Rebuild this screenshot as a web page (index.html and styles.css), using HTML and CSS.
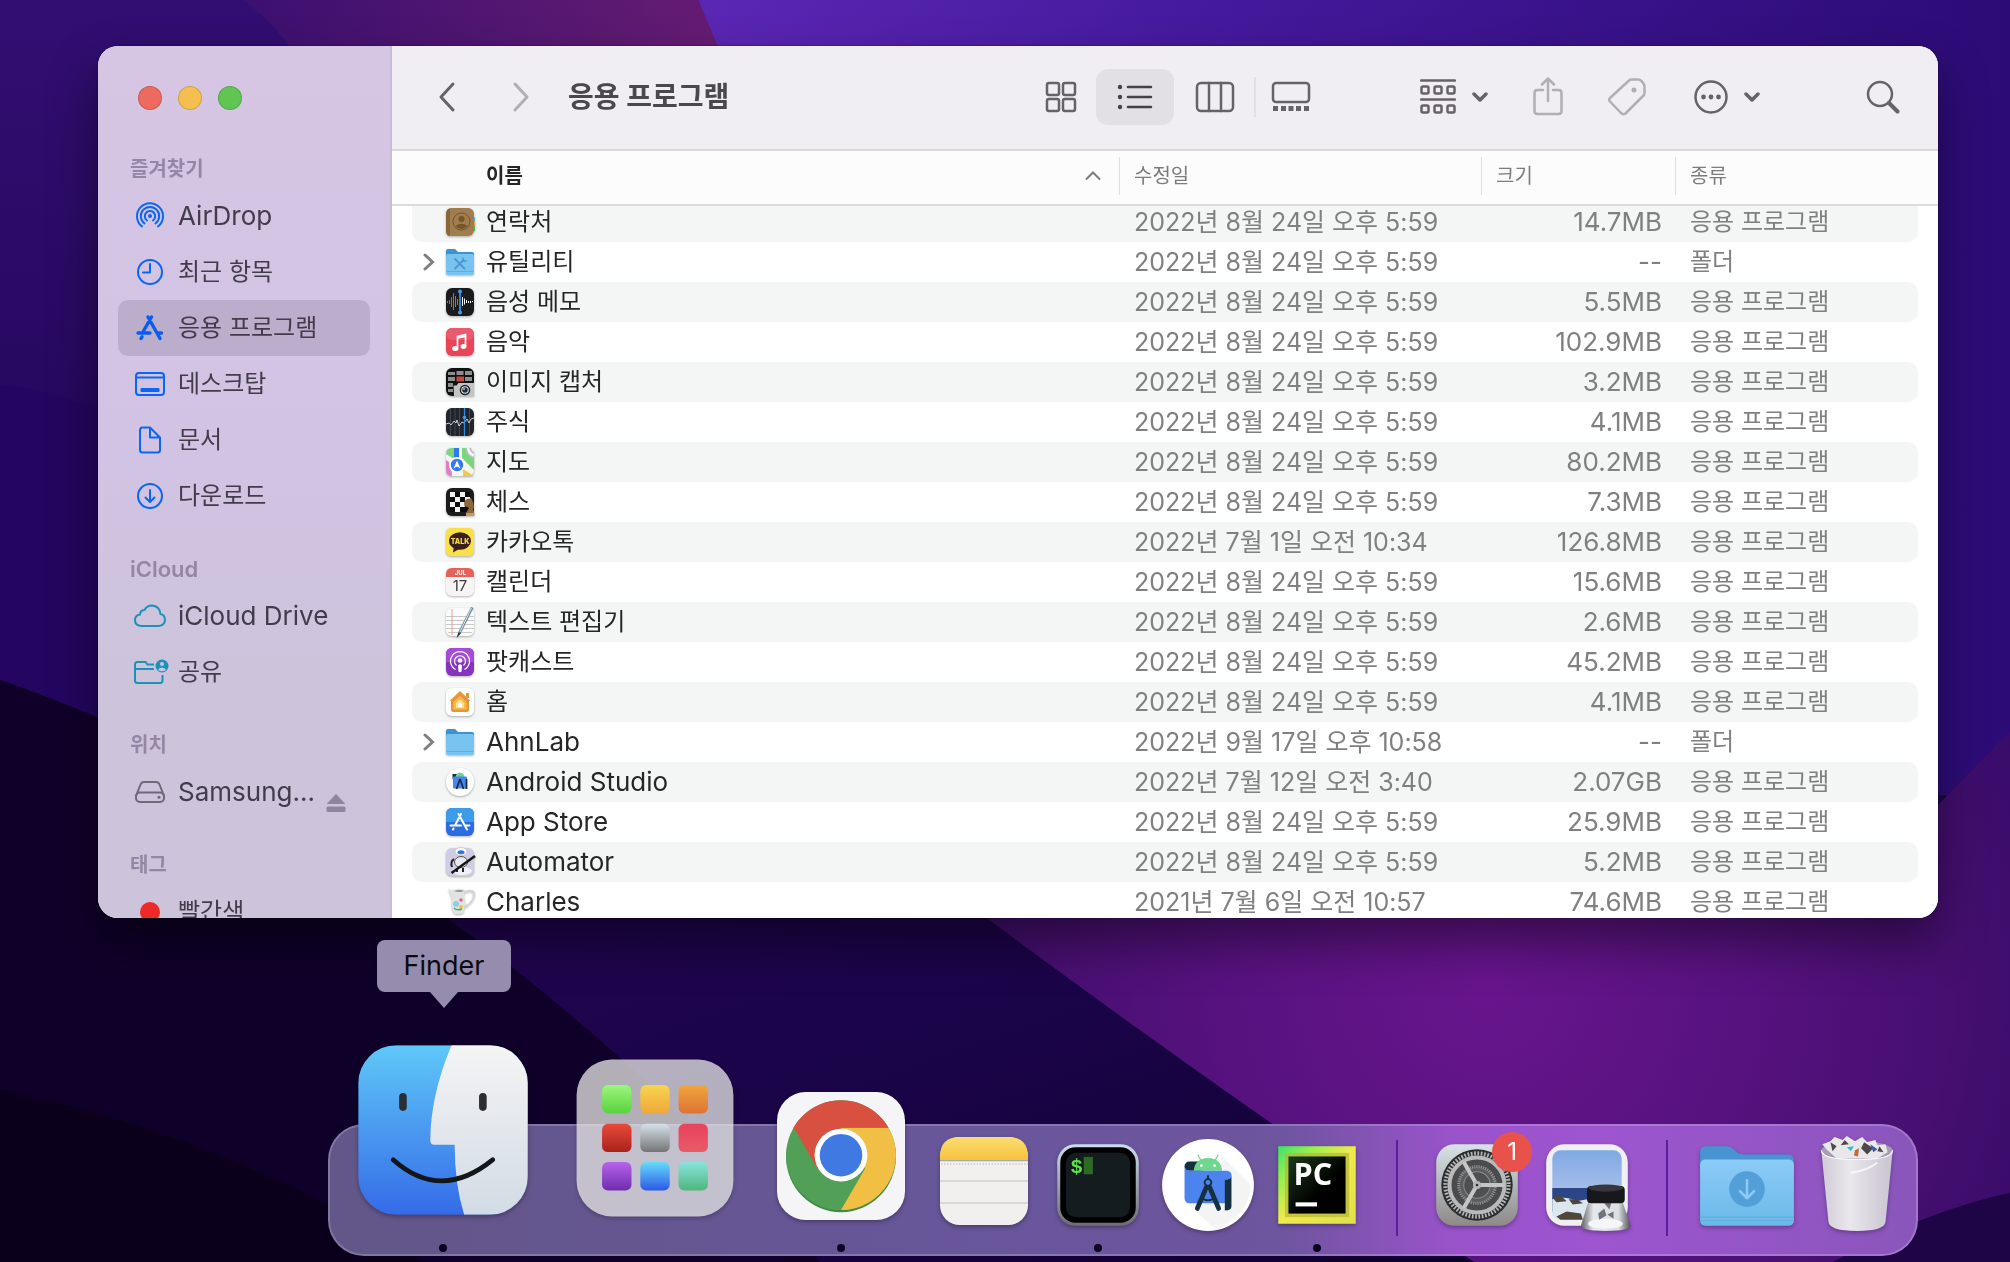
FILE: index.html
```html
<!DOCTYPE html>
<html lang="ko">
<head>
  <meta charset="UTF-8">
  <meta name="viewport" content="width=device-width, initial-scale=1.0">
  <title>응용 프로그램</title>
  <link rel="stylesheet" href="styles.css">
</head>
<body>
  <!-- wallpaper -->
  <svg class="wallpaper" viewBox="0 0 1568 984" preserveAspectRatio="none" aria-hidden="true">
    <defs>
      <linearGradient id="wp-base" x1="0" y1="0" x2="0" y2="1">
        <stop offset="0" stop-color="#320e72"/><stop offset=".5" stop-color="#210556"/><stop offset="1" stop-color="#130033"/>
      </linearGradient>
      <linearGradient id="wp-plum" x1="0" y1="0" x2="1" y2="0">
        <stop offset="0" stop-color="#3c1070"/><stop offset="1" stop-color="#651c72"/>
      </linearGradient>
      <linearGradient id="wp-blue" x1="0" y1="0" x2="1" y2="0">
        <stop offset="0" stop-color="#5a27b4"/><stop offset=".4" stop-color="#44199c"/><stop offset="1" stop-color="#2c0b76"/>
      </linearGradient>
      <linearGradient id="wp-navy" x1="0" y1="0" x2="1" y2="1">
        <stop offset="0" stop-color="#220550"/><stop offset=".5" stop-color="#1a0448"/><stop offset="1" stop-color="#10002f"/>
      </linearGradient>
      <radialGradient id="wp-magenta" gradientUnits="userSpaceOnUse" cx="1160" cy="770" r="480">
        <stop offset="0" stop-color="#67158c"/><stop offset=".4" stop-color="#581280"/><stop offset=".75" stop-color="#460f70"/><stop offset="1" stop-color="#340b68"/>
      </radialGradient>
    </defs>
    <rect width="1568" height="984" fill="url(#wp-base)"/>
    <path d="M190 0H560V80H250Q230 30 190 0Z" fill="url(#wp-plum)"/>
    <path d="M545 0H1568V620H1400L570 60Z" fill="url(#wp-blue)"/>
    <path d="M0 300Q50 305 100 330V620L0 530Z" fill="#240660"/>
    <path d="M0 530Q200 600 360 725Q480 800 560 880L640 984H0Z" fill="#0f0029"/>
    <path d="M0 850Q180 885 330 984H0Z" fill="#0a001c"/>
    <path d="M300 680H760Q900 810 1010 885L1160 984H640Q500 820 300 680Z" fill="url(#wp-navy)"/>
    <path d="M700 640H1500L1568 570V984H1150Q950 850 770 716Z" fill="url(#wp-magenta)"/>
    <path d="M1430 984Q1500 945 1568 930V984Z" fill="#1d0546"/>
  </svg>

  <div class="desktop">
    <main class="window">
      <aside class="sidebar">
        <div class="lights">
          <button class="light close" aria-label="닫기"></button>
          <button class="light minimize" aria-label="최소화"></button>
          <button class="light maximize" aria-label="확대"></button>
        </div>

        <nav>
          <h2>즐겨찾기</h2>
          <ul>
            <li><a href="#" lang="en">
              <svg class="side-icon" viewBox="0 0 40 32" fill="none" stroke="#0a66f5" stroke-width="2" stroke-linecap="round">
                <circle cx="20" cy="16" r="2" fill="#0a66f5" stroke="none"/>
                <path d="M17 20.500A5.200 5.200 0 1 1 23 20.500M14.500 23.500A9.200 9.200 0 1 1 25.500 23.500M12 26.500A13 13 0 1 1 28 26.500"/>
              </svg>AirDrop</a></li>
            <li><a href="#">
              <svg class="side-icon" viewBox="0 0 40 32" fill="none" stroke="#0a66f5" stroke-width="2" stroke-linecap="round" stroke-linejoin="round">
                <circle cx="20" cy="16" r="12"/><path d="M20 8V16.500H13"/>
              </svg>최근 항목</a></li>
            <li><a href="#" class="selected">
              <svg class="side-icon" viewBox="0 0 40 32" fill="none" stroke="#0a5cf0" stroke-width="3.400" stroke-linecap="round">
                <path d="M21.500 5L13.500 19M18 5L30 26.500M8 21H20M27 21H31.500M12 24.800L11 26.500"/>
              </svg>응용 프로그램</a></li>
            <li><a href="#">
              <svg class="side-icon" viewBox="0 0 40 32" fill="none" stroke="#0a66f5" stroke-width="2">
                <rect x="6" y="5" width="28" height="22" rx="3"/><path d="M6 9.500H34"/><rect x="10.500" y="20" width="19" height="4" rx="1" fill="#0a66f5" stroke="none"/>
              </svg>데스크탑</a></li>
            <li><a href="#">
              <svg class="side-icon" viewBox="0 0 40 32" fill="none" stroke="#0a66f5" stroke-width="2" stroke-linejoin="round">
                <path d="M12.500 3.500H20L30 13.500V26Q30 28.500 27.500 28.500H12.500Q10 28.500 10 26V6Q10 3.500 12.500 3.500ZM20 3.500V13.500H30"/>
              </svg>문서</a></li>
            <li><a href="#">
              <svg class="side-icon" viewBox="0 0 40 32" fill="none" stroke="#0a66f5" stroke-width="2" stroke-linecap="round" stroke-linejoin="round">
                <circle cx="20" cy="16" r="12"/><path d="M20 10V21.500M15.500 17.500L20 22L24.500 17.500"/>
              </svg>다운로드</a></li>
          </ul>

          <h2 lang="en">iCloud</h2>
          <ul>
            <li><a href="#" lang="en">
              <svg class="side-icon" viewBox="0 0 40 32" fill="none" stroke="#1b93b8" stroke-width="2">
                <path d="M11 26Q5 25.500 5 20Q5 15.500 10 14.500Q10.500 10 14.500 10Q17 5.500 22 5.500Q29.500 6 30.500 14Q35 15 35 20Q34.500 25.500 29 26Z"/>
              </svg>iCloud Drive</a></li>
            <li><a href="#">
              <svg class="side-icon" viewBox="0 0 40 32" fill="none" stroke="#1b93b8" stroke-width="2">
                <path d="M24 8.500H17.500L15.500 6H7.500Q5 6 5 8.500V24.500Q5 27 7.500 27H30Q32.500 27 32.500 24.500V19M5 13H24"/>
                <circle cx="32" cy="10" r="6.500" fill="#1b93b8" stroke="none"/>
                <circle cx="32" cy="8" r="2" fill="#d0c4df" stroke="none"/><path d="M28 14Q29 11.500 32 11.500Q35 11.500 36 14Q32 16.500 28 14Z" fill="#d0c4df" stroke="none"/>
              </svg>공유</a></li>
          </ul>

          <h2>위치</h2>
          <ul>
            <li><a href="#" lang="en">
              <svg class="side-icon" viewBox="0 0 40 32" fill="none" stroke="#706879" stroke-width="2" stroke-linejoin="round">
                <path d="M6 20L10.500 8.500Q11.500 6 14 6H26Q28.500 6 29.500 8.500L34 20"/><rect x="6" y="16.500" width="28" height="9.500" rx="4"/><circle cx="29" cy="21.300" r="1.500" fill="#706879" stroke="none"/>
              </svg>Samsung...</a>
              <button class="eject" aria-label="추출">
                <svg viewBox="0 0 20 20" fill="#8f859f"><path d="M10 1L19 10.500Q19 11 18.500 11H1.500Q1 11 1 10.500Z"/><rect x=".5" y="13.500" width="19" height="5.500" rx="1.500"/></svg>
              </button></li>
          </ul>

          <h2>태그</h2>
          <ul>
            <li><a href="#"><svg class="side-icon" viewBox="0 0 40 32"><circle cx="20" cy="16" r="10" fill="#f02828"/></svg>빨간색</a></li>
          </ul>
        </nav>
      </aside>

      <section class="content">
        <header class="toolbar">
          <button class="tool back" aria-label="뒤로"><svg width="20" height="32" viewBox="0 0 20 32"><path d="M16 3L4 16L16 29"/></svg></button>
          <button class="tool forward dim" aria-label="앞으로"><svg width="20" height="32" viewBox="0 0 20 32"><path d="M4 3L16 16L4 29"/></svg></button>
          <h1>응용 프로그램</h1>

          <div class="views">
            <button class="tool" aria-label="아이콘"><svg width="32" height="32" viewBox="0 0 32 32"><rect x="2" y="2" width="12" height="12" rx="2"/><rect x="18" y="2" width="12" height="12" rx="2"/><rect x="2" y="18" width="12" height="12" rx="2"/><rect x="18" y="18" width="12" height="12" rx="2"/></svg></button>
            <button class="tool active" aria-label="목록"><svg width="36" height="32" viewBox="0 0 36 32"><path d="M11 6H34M11 16H34M11 26H34"/><g class="solid"><circle cx="3" cy="6" r="2.200"/><circle cx="3" cy="16" r="2.200"/><circle cx="3" cy="26" r="2.200"/></g></svg></button>
            <button class="tool" aria-label="계층"><svg width="40" height="32" viewBox="0 0 40 32"><rect x="2" y="2" width="36" height="28" rx="4"/><path d="M14 2V30M26 2V30"/></svg></button>
            <span class="divider"></span>
            <button class="tool" aria-label="갤러리"><svg width="40" height="32" viewBox="0 0 40 32"><rect x="2" y="2" width="36" height="19" rx="3"/><path class="solid" d="M2 25h5v5h-5zM10 25h5v5h-5zM17.500 25h5v5h-5zM25 25h5v5h-5zM33 25h5v5h-5z"/></svg></button>
          </div>

          <button class="tool group" aria-label="그룹">
            <svg width="36" height="36" viewBox="0 0 36 36"><path d="M1 1.500H35M1 20.500H35"/><rect x="1.500" y="7.500" width="7" height="7" rx="1.500"/><rect x="14.500" y="7.500" width="7" height="7" rx="1.500"/><rect x="27.500" y="7.500" width="7" height="7" rx="1.500"/><rect x="1.500" y="26.500" width="7" height="7" rx="1.500"/><rect x="14.500" y="26.500" width="7" height="7" rx="1.500"/><rect x="27.500" y="26.500" width="7" height="7" rx="1.500"/></svg>
            <svg class="arrow" width="16" height="12" viewBox="0 0 16 12"><path d="M2 3L8 9L14 3"/></svg>
          </button>
          <button class="tool share dim" aria-label="공유"><svg width="32" height="40" viewBox="0 0 32 40"><path d="M11 13H5.500Q2.500 13 2.500 16V34Q2.500 37 5.500 37H26.500Q29.500 37 29.500 34V16Q29.500 13 26.500 13H21M16 2V24M10 7.500L16 1.500L22 7.500"/></svg></button>
          <button class="tool tag dim" aria-label="태그"><svg width="40" height="40" viewBox="0 0 40 40"><path d="M22 3.500Q23 2.500 24.500 2.500H31Q33 2.500 34.500 4L36.500 6.500Q37.500 8 37.500 9.500V16Q37.500 17.500 36.500 18.500L18.500 36.500Q16.500 38 14.500 36.500L3 24.500Q1.500 23 3 21Z"/><circle class="solid" cx="27" cy="13" r="2.500"/></svg></button>
          <button class="tool more" aria-label="더 보기">
            <svg width="34" height="34" viewBox="0 0 34 34"><circle cx="17" cy="17" r="15.500"/><g class="solid"><circle cx="9.500" cy="17" r="2.400"/><circle cx="17" cy="17" r="2.400"/><circle cx="24.500" cy="17" r="2.400"/></g></svg>
            <svg class="arrow" width="16" height="12" viewBox="0 0 16 12"><path d="M2 3L8 9L14 3"/></svg>
          </button>
          <button class="tool search" aria-label="검색"><svg width="34" height="34" viewBox="0 0 34 34"><circle cx="14" cy="14" r="12"/><path d="M23 23L31.500 31.500" stroke-width="4"/></svg></button>
        </header>

        <div class="list">
          <table>
            <colgroup><col><col class="col-date"><col class="col-size"><col class="col-kind"></colgroup>
            <thead>
              <tr>
                <th class="sorted"><span>이름<svg width="16" height="10" viewBox="0 0 16 10"><path d="M1 8.500L8 1.500L15 8.500"/></svg></span></th>
                <th><span>수정일</span></th>
                <th><span>크기</span></th>
                <th><span>종류</span></th>
              </tr>
            </thead>
            <tbody>
              <tr>
                <td><div class="name"><span class="toggle"></span>
                  <svg class="app" viewBox="0 0 28 28"><path d="M26 9h3v5h-3z" fill="#5ab4e6"/><path d="M26 14h3v4h-3z" fill="#f39a2d"/><path d="M26 18h3v5h-3z" fill="#4fbf57"/><rect width="28" height="28" rx="6" fill="#a17c4c"/><path d="M6 0Q0 0 0 6V22Q0 28 4 28V0Z" fill="#8a673a"/><circle cx="15.500" cy="13.500" r="8.500" fill="none" stroke="#74552c"/><circle cx="15.500" cy="11" r="3" fill="#74552c"/><path d="M9.500 18Q15.500 13.500 21.500 18Q15.500 24 9.500 18Z" fill="#74552c"/></svg>
                  연락처</div></td>
                <td>2022년 8월 24일 오후 5:59</td><td>14.7MB</td><td>응용 프로그램</td>
              </tr>
              <tr>
                <td><div class="name"><button class="toggle" aria-label="열기"><svg width="12" height="18" viewBox="0 0 12 18"><path d="M2 2L9.500 9L2 16"/></svg></button>
                  <svg class="app" viewBox="0 0 28 28"><path d="M0 3Q0 1 2 1H9L12 4H26Q28 4 28 6V12H0Z" fill="#3d93cf"/><rect y="6" width="28" height="21" rx="2" fill="#78c3f0"/><path d="M1 23.500H27" stroke="#5eaee0"/><path d="M9 11L18.500 20.500M17.500 12L9 20.500" stroke="#4a98cf" stroke-width="1.800" stroke-linecap="round"/><path d="M17 9.500V13H20.500" fill="none" stroke="#4a98cf" stroke-width="1.500"/></svg>
                  유틸리티</div></td>
                <td>2022년 8월 24일 오후 5:59</td><td>--</td><td>폴더</td>
              </tr>
              <tr>
                <td><div class="name"><span class="toggle"></span>
                  <svg class="app" viewBox="0 0 28 28"><rect width="28" height="28" rx="6" fill="#1b1b1d"/><path d="M1.500 13v2M3.500 12v4M5.500 9v10M7.500 5v17M9.500 8v11M11.500 11v6" stroke="#e0564c"/><path d="M16.500 9v9M18.500 10.500v6M20.500 12v3M22.500 13v2M24.500 13v2M26.500 13v1" stroke="#fff"/><path d="M14 3V25" stroke="#3c9cf0" stroke-width="1.600"/><circle cx="14" cy="3.500" r="2" fill="#3c9cf0"/><circle cx="14" cy="24.500" r="2" fill="#3c9cf0"/></svg>
                  음성 메모</div></td>
                <td>2022년 8월 24일 오후 5:59</td><td>5.5MB</td><td>응용 프로그램</td>
              </tr>
              <tr>
                <td><div class="name"><span class="toggle"></span>
                  <svg class="app" viewBox="0 0 28 28"><rect width="28" height="28" rx="6" fill="#e94457"/><rect width="28" height="12" rx="6" fill="#ea5a6e"/><path d="M11.500 20V8.500L19.500 6.500V18" fill="none" stroke="#fff" stroke-width="1.700"/><path d="M11 9L20 7V9L11 11Z" fill="#fff"/><ellipse cx="9.300" cy="20.500" rx="3.200" ry="2.500" fill="#fff"/><ellipse cx="17.500" cy="18.500" rx="3" ry="2.400" fill="#fff"/></svg>
                  음악</div></td>
                <td>2022년 8월 24일 오후 5:59</td><td>102.9MB</td><td>응용 프로그램</td>
              </tr>
              <tr>
                <td><div class="name"><span class="toggle"></span>
                  <svg class="app" viewBox="0 0 28 28"><rect width="28" height="28" rx="6" fill="#111"/><path d="M2 4h7v3H2zM10.500 3h7v4h-7zM19 3h7v4h-7zM2 9h7v4H2zM19 9h7v4h-7zM2 15h5v4H2zM2 21h5v3H2z" fill="#8d8d8d"/><path d="M10.500 8.500h7.500v5h-7.500z" fill="#c9473d"/><path d="M7.500 17.500h3l2-2.500h15.500V28H8z" fill="#c3c3c3"/><circle cx="19" cy="22" r="5.300" fill="#222"/><circle cx="19" cy="22" r="3.800" fill="#e8e8e8"/><circle cx="19" cy="22" r="2.800" fill="#1c2a40"/><circle cx="18" cy="21" r="1" fill="#9cc0e8"/></svg>
                  이미지 캡처</div></td>
                <td>2022년 8월 24일 오후 5:59</td><td>3.2MB</td><td>응용 프로그램</td>
              </tr>
              <tr>
                <td><div class="name"><span class="toggle"></span>
                  <svg class="app" viewBox="0 0 28 28"><rect width="28" height="28" rx="6" fill="#22252b"/><path d="M4.500 0V28M9 0V28M13.500 0V28M23.500 0V28" stroke="#4a4f58" stroke-width=".8"/><path d="M0 16L3 15L5 17L8 13L10 15L11 12L13 18L16 14L18 15L21 11L23 15L25 11L28 10" fill="none" stroke="#d8dbe0" stroke-width=".9"/><path d="M18.500 0V28" stroke="#2f8be0" stroke-width="1.300"/><circle cx="18.500" cy="9.500" r="1.800" fill="#3c9cf0"/></svg>
                  주식</div></td>
                <td>2022년 8월 24일 오후 5:59</td><td>4.1MB</td><td>응용 프로그램</td>
              </tr>
              <tr>
                <td><div class="name"><span class="toggle"></span>
                  <svg class="app" viewBox="0 0 28 28"><rect width="28" height="28" rx="6" fill="#f4f4f2"/><path d="M6 0Q0 0 0 6L8 11V0ZM16 0H20Q21 9 28 10V22L16 10Z" fill="#79d67b"/><path d="M0 12Q6 14 6 28Q0 28 0 22Z" fill="#dd80c8"/><path d="M17 21L28 28H17Z" fill="#f3c844"/><path d="M20 0Q21 8 28 9.500M24 0Q25 4 28 5" fill="none" stroke="#b9bdc2" stroke-width="1.500"/><path d="M8 0H13V10H8Z" fill="#3478f0"/><circle cx="11" cy="17" r="8" fill="#fff"/><circle cx="11" cy="17" r="6.200" fill="#3478f0"/><path d="M11 12.500L14.500 20.500L11 18.500L7.500 20.500Z" fill="#fff"/></svg>
                  지도</div></td>
                <td>2022년 8월 24일 오후 5:59</td><td>80.2MB</td><td>응용 프로그램</td>
              </tr>
              <tr>
                <td><div class="name"><span class="toggle"></span>
                  <svg class="app" viewBox="0 0 28 28"><rect width="28" height="28" rx="6" fill="#1c1c1c"/><rect x="4" y="4" width="20" height="20" fill="#0c0c0c"/><path d="M4 4h5v5H4zM14 4h5v5h-5zM9 9h5v5H9zM19 9h5v5h-5zM4 14h5v5H4zM14 14h5v5h-5zM9 19h5v5H9z" fill="#f1f1f1"/><path d="M18 15Q20 10 24 11L25 9.500L26 12Q29 17 27 22L28 25V27.500H20V25L23 20Q21 18 18.500 18.500Z" fill="#8b6638"/><path d="M20 25H28.500V28H20Z" fill="#c49a60"/></svg>
                  체스</div></td>
                <td>2022년 8월 24일 오후 5:59</td><td>7.3MB</td><td>응용 프로그램</td>
              </tr>
              <tr>
                <td><div class="name"><span class="toggle"></span>
                  <svg class="app" viewBox="0 0 28 28"><rect width="28" height="28" rx="5" fill="#f9e049"/><ellipse cx="14" cy="13" rx="11" ry="8.800" fill="#3a1f1d"/><path d="M8 18L7 24.500L14 20.500Z" fill="#3a1f1d"/><text class="talk" x="14" y="16" text-anchor="middle">TALK</text></svg>
                  카카오톡</div></td>
                <td>2022년 7월 1일 오전 10:34</td><td>126.8MB</td><td>응용 프로그램</td>
              </tr>
              <tr>
                <td><div class="name"><span class="toggle"></span>
                  <svg class="app" viewBox="0 0 28 28"><rect width="28" height="28" rx="6" fill="#f6f5f4"/><path d="M0 9V6Q0 0 6 0H22Q28 0 28 6V9Z" fill="#e5625a"/><text class="cal-month" x="14.500" y="7" text-anchor="middle">JUL</text><text class="cal-day" x="14" y="23" text-anchor="middle">17</text></svg>
                  캘린더</div></td>
                <td>2022년 8월 24일 오후 5:59</td><td>15.6MB</td><td>응용 프로그램</td>
              </tr>
              <tr>
                <td><div class="name"><span class="toggle"></span>
                  <svg class="app" viewBox="0 0 28 28"><rect width="28" height="28" rx="6" fill="#fbfbfa"/><path d="M0 8.500H28M0 12.500H28M0 16.500H28M0 20.500H28M2 24.500H26" stroke="#c9c9c9"/><path d="M6 1V27" stroke="#ef9a94"/><path d="M25 -1L27.500 0L15 25L11 29.500L12.500 23.500Z" fill="#6b879f"/><path d="M25.500 0L14 24" stroke="#dfe9f1"/><path d="M12.500 24.500L15 25L10.500 30Z" fill="#333"/></svg>
                  텍스트 편집기</div></td>
                <td>2022년 8월 24일 오후 5:59</td><td>2.6MB</td><td>응용 프로그램</td>
              </tr>
              <tr>
                <td><div class="name"><span class="toggle"></span>
                  <svg class="app" viewBox="0 0 28 28"><rect width="28" height="28" rx="6" fill="#8434bd"/><path d="M0 14V6Q0 0 6 0H22Q28 0 28 6V14Z" fill="#a44cd8"/><g fill="none" stroke="#fff" stroke-width="1.200"><path d="M9.500 21.500A9.500 9.500 0 1 1 18.500 21.500"/><path d="M10.500 17.500A5.500 5.500 0 1 1 17.500 17.500"/></g><circle cx="14" cy="12.500" r="2.300" fill="#fff"/><path d="M12 17.500Q14 15 16 17.500L15.500 23.500Q14 25 12.500 23.500Z" fill="#fff"/></svg>
                  팟캐스트</div></td>
                <td>2022년 8월 24일 오후 5:59</td><td>45.2MB</td><td>응용 프로그램</td>
              </tr>
              <tr>
                <td><div class="name"><span class="toggle"></span>
                  <svg class="app" viewBox="0 0 28 28"><rect width="28" height="28" rx="6" fill="#fff"/><path d="M14 3L24.500 13H23V22Q23 24 21 24H7Q5 24 5 22V13H3.500ZM20 5h3v5h-3z" fill="#e8953a"/><path d="M14 8L20.500 14V21.500H7.500V14Z" fill="#f4bb4e"/><path d="M14 11.500L18 15V20H10V15Z" fill="#fbdf8e"/><path d="M14 14L16 16V19H12V16Z" fill="#fff"/></svg>
                  홈</div></td>
                <td>2022년 8월 24일 오후 5:59</td><td>4.1MB</td><td>응용 프로그램</td>
              </tr>
              <tr>
                <td><div class="name" lang="en"><button class="toggle" aria-label="열기"><svg width="12" height="18" viewBox="0 0 12 18"><path d="M2 2L9.500 9L2 16"/></svg></button>
                  <svg class="app" viewBox="0 0 28 28"><path d="M0 3Q0 1 2 1H9L12 4H26Q28 4 28 6V12H0Z" fill="#3d93cf"/><rect y="6" width="28" height="21" rx="2" fill="#78c3f0"/><path d="M1 23.500H27" stroke="#5eaee0"/></svg>
                  AhnLab</div></td>
                <td>2022년 9월 17일 오후 10:58</td><td>--</td><td>폴더</td>
              </tr>
              <tr>
                <td><div class="name" lang="en"><span class="toggle"></span>
                  <svg class="app" viewBox="0 0 28 28"><circle cx="14" cy="14" r="14" fill="#fff"/><path d="M6.500 6H12V11H6.500Z" fill="#15303f"/><path d="M9.500 9Q10 5 14 4.500Q18 5 18.500 9Z" fill="#6fd68d"/><rect x="7" y="8.500" width="14" height="12" rx="1" fill="#4d83ee"/><path d="M14 11L10.500 21M14 11L17.500 21M20.500 11V21" stroke="#15303f" stroke-width="1.800"/></svg>
                  Android Studio</div></td>
                <td>2022년 7월 12일 오전 3:40</td><td>2.07GB</td><td>응용 프로그램</td>
              </tr>
              <tr>
                <td><div class="name" lang="en"><span class="toggle"></span>
                  <svg class="app" viewBox="0 0 28 28"><rect width="28" height="28" rx="6" fill="#2b6ce0"/><path d="M0 14V6Q0 0 6 0H22Q28 0 28 6V14Z" fill="#3c9cea"/><path d="M15 6L9.500 16.500M12.500 6L21 21.500M4.500 17.500H15M18.500 17.500H23.500M7.500 20.500L7 21.500" fill="none" stroke="#fff" stroke-width="2" stroke-linecap="round"/></svg>
                  App Store</div></td>
                <td>2022년 8월 24일 오후 5:59</td><td>25.9MB</td><td>응용 프로그램</td>
              </tr>
              <tr>
                <td><div class="name" lang="en"><span class="toggle"></span>
                  <svg class="app" viewBox="0 0 28 28"><rect width="28" height="28" rx="6" fill="#cfcde6"/><ellipse cx="16" cy="23" rx="10" ry="4" fill="#f1f0fa"/><ellipse cx="15" cy="14" rx="6.500" ry="5.500" fill="#e9e9ee" stroke="#555"/><ellipse cx="15" cy="3.500" rx="6" ry="4" fill="#fafafa" stroke="#bbb" stroke-width=".6"/><ellipse cx="15" cy="4.200" rx="3.500" ry="2" fill="#2c7bd6"/><path d="M8 11Q4 14 6 19M11 21v3M17 20v4" fill="none" stroke="#222" stroke-width="2"/><path d="M5.500 25L29 8" stroke="#151515" stroke-width="2.500"/></svg>
                  Automator</div></td>
                <td>2022년 8월 24일 오후 5:59</td><td>5.2MB</td><td>응용 프로그램</td>
              </tr>
              <tr>
                <td><div class="name" lang="en"><span class="toggle"></span>
                  <svg class="app" viewBox="0 0 28 28"><path d="M19 4Q29 0 28 8Q27 14 19 19" fill="none" stroke="#cfd2d4" stroke-width="1.500"/><path d="M2 1Q6 3 8 2Q14 0 19 2Q17 8 19 14Q19 22 16 26H9Q5 22 6 13Q6 8 2 1Z" fill="#dfe4e3"/><path d="M8 3Q14 1 18 3Q14 5 8 3Z" fill="#8d9493"/><circle cx="10" cy="16" r="3" fill="#8fcfdc"/><circle cx="15" cy="12" r="1.800" fill="#e65aa8"/><circle cx="15" cy="19" r="2" fill="#f0c544"/><path d="M8 20Q11 23 16 21" fill="none" stroke="#5ba86a" stroke-width="1.500"/></svg>
                  Charles</div></td>
                <td>2021년 7월 6일 오전 10:57</td><td>74.6MB</td><td>응용 프로그램</td>
              </tr>
            </tbody>
          </table>
        </div>
      </section>
    </main>

    <footer class="dock">
      <button class="slot slot-xl running" aria-label="Finder">
        <span class="tooltip">Finder</span>
        <svg viewBox="0 0 100 100">
          <defs>
            <linearGradient id="finder-blue" x1="0" y1="0" x2="0" y2="1"><stop offset="0" stop-color="#5fc8f8"/><stop offset="1" stop-color="#356be8"/></linearGradient>
            <linearGradient id="finder-white" x1="0" y1="0" x2="0" y2="1"><stop offset="0" stop-color="#f4f4f4"/><stop offset="1" stop-color="#d2dbe5"/></linearGradient>
            <clipPath id="finder-clip"><rect x="10" y="10" width="80" height="80" rx="18"/></clipPath>
          </defs>
          <g clip-path="url(#finder-clip)">
            <rect x="10" y="10" width="80" height="80" fill="url(#finder-blue)"/>
            <path d="M54 10Q44 34 44 55Q44 57 46 57H55.500Q55.500 76 60 90H90V10Z" fill="url(#finder-white)"/>
          </g>
          <rect x="29.300" y="32.500" width="3.600" height="8.500" rx="1.800" fill="#2b2d31"/><rect x="67" y="32.500" width="3.600" height="8.500" rx="1.800" fill="#2b2d31"/>
          <path d="M26.500 64Q49 84 73.500 64" fill="none" stroke="#14161a" stroke-width="2.200" stroke-linecap="round"/>
        </svg>
      </button>
      <button class="slot slot-l" aria-label="Launchpad">
        <svg viewBox="0 0 100 100">
          <defs>
            <linearGradient id="lp1" x1="0" y1="0" x2="0" y2="1"><stop offset="0" stop-color="#9df57c"/><stop offset="1" stop-color="#5ad23e"/></linearGradient>
            <linearGradient id="lp2" x1="0" y1="0" x2="0" y2="1"><stop offset="0" stop-color="#f6d552"/><stop offset="1" stop-color="#f0a738"/></linearGradient>
            <linearGradient id="lp3" x1="0" y1="0" x2="0" y2="1"><stop offset="0" stop-color="#f0a63c"/><stop offset="1" stop-color="#de7335"/></linearGradient>
            <linearGradient id="lp4" x1="0" y1="0" x2="0" y2="1"><stop offset="0" stop-color="#e94a3a"/><stop offset="1" stop-color="#a8221a"/></linearGradient>
            <linearGradient id="lp5" x1="0" y1="0" x2="0" y2="1"><stop offset="0" stop-color="#d5e2ea"/><stop offset="1" stop-color="#747474"/></linearGradient>
            <linearGradient id="lp6" x1="0" y1="0" x2="0" y2="1"><stop offset="0" stop-color="#e8435e"/><stop offset="1" stop-color="#e95a68"/></linearGradient>
            <linearGradient id="lp7" x1="0" y1="0" x2="0" y2="1"><stop offset="0" stop-color="#b763ea"/><stop offset="1" stop-color="#6f2cae"/></linearGradient>
            <linearGradient id="lp8" x1="0" y1="0" x2="0" y2="1"><stop offset="0" stop-color="#65dcfb"/><stop offset="1" stop-color="#2c58e6"/></linearGradient>
            <linearGradient id="lp9" x1="0" y1="0" x2="0" y2="1"><stop offset="0" stop-color="#87e4dd"/><stop offset="1" stop-color="#4fb67c"/></linearGradient>
          </defs>
          <rect x="10" y="10" width="80" height="80" rx="18" fill="rgba(240,240,240,.73)"/>
          <rect x="23" y="23" width="15" height="14.500" rx="3" fill="url(#lp1)"/><rect x="42.500" y="23" width="15" height="14.500" rx="3" fill="url(#lp2)"/><rect x="62" y="23" width="15" height="14.500" rx="3" fill="url(#lp3)"/>
          <rect x="23" y="42.700" width="15" height="14.500" rx="3" fill="url(#lp4)"/><rect x="42.500" y="42.700" width="15" height="14.500" rx="3" fill="url(#lp5)"/><rect x="62" y="42.700" width="15" height="14.500" rx="3" fill="url(#lp6)"/>
          <rect x="23" y="62.300" width="15" height="14.500" rx="3" fill="url(#lp7)"/><rect x="42.500" y="62.300" width="15" height="14.500" rx="3" fill="url(#lp8)"/><rect x="62" y="62.300" width="15" height="14.500" rx="3" fill="url(#lp9)"/>
        </svg>
      </button>
      <button class="slot slot-m running" aria-label="Google Chrome">
        <svg viewBox="0 0 100 100">
          <rect x="10" y="10" width="80" height="80" rx="18" fill="#f5f5f8"/>
          <circle cx="50" cy="50.800" r="34.300" fill="#3f8b44"/>
          <circle cx="50" cy="49.500" r="34.300" fill="#52a058"/>
          <path d="M50 83.800A34.300 34.300 0 0 0 79.700 32.300H50L65 58Z" fill="#f2bf45"/>
          <path d="M20.300 32.300A34.300 34.300 0 0 1 79.700 32.300H50L35 58Z" fill="#d8503f"/>
          <path d="M20.300 32.300L35 58" stroke="#52a058" stroke-width=".5"/>
          <circle cx="50" cy="49.500" r="16.500" fill="#fff"/><circle cx="50" cy="49.500" r="13.300" fill="#4079e2"/>
        </svg>
      </button>
      <button class="slot slot-s" aria-label="메모">
        <svg viewBox="0 0 100 100">
          <defs><linearGradient id="notes-top" x1="0" y1="0" x2="0" y2="1"><stop offset="0" stop-color="#fbdc72"/><stop offset="1" stop-color="#f5c43d"/></linearGradient></defs>
          <rect x="10" y="10" width="80" height="80" rx="18" fill="#f1f0ee"/>
          <path d="M10 31V28Q10 10 28 10H72Q90 10 90 28V31Z" fill="url(#notes-top)"/>
          <path d="M10 31.500H90" stroke="#a9a9a9"/><path d="M11 34.500H90" stroke="#b5b5b5" stroke-dasharray="1.200 1.500"/>
          <path d="M10 50H90M10 70H90" stroke="#cfcfcf" stroke-width="1.500"/>
        </svg>
      </button>
      <button class="slot running" aria-label="iTerm">
        <svg viewBox="0 0 100 100">
          <defs><linearGradient id="term-rim" x1="0" y1="0" x2="0" y2="1"><stop offset="0" stop-color="#c9deec"/><stop offset="1" stop-color="#6d6b72"/></linearGradient></defs>
          <rect x="10" y="10" width="80" height="80" rx="18" fill="url(#term-rim)"/>
          <rect x="13" y="13" width="74" height="74" rx="15" fill="#000"/>
          <rect x="18.500" y="18.500" width="63" height="63" rx="10" fill="#151c20"/>
          <text class="prompt" x="23" y="38">$</text><rect x="36" y="22.500" width="9" height="17" fill="#2d6a24"/>
        </svg>
      </button>
      <button class="slot" aria-label="Android Studio">
        <svg viewBox="0 0 100 100">
          <circle cx="50" cy="50" r="45" fill="#fff"/>
          <path d="M62 20L92 50Q90 80 58 94L30 68L72 66Z" fill="#f4f4f4"/>
          <rect x="27" y="27" width="20" height="9" rx="4.500" fill="#15303f"/>
          <path d="M36 36Q37 24 50 23.500Q63 24 64 36Z" fill="#6fd68d"/><path d="M43 26L40 20M57 26L60 20" stroke="#6fd68d" stroke-width="1.200"/><circle cx="43.500" cy="31" r="1.300" fill="#fff"/><circle cx="56.500" cy="31" r="1.300" fill="#fff"/>
          <path d="M27 32Q28 36 32 36H69Q73 37 73 40Q73 44 68 45V68H32Q27 68 27 63Z" fill="#4d83ee"/>
          <path d="M66.500 45Q73 45 73 40V71Q73 75 66.500 75Z" fill="#15303f"/>
          <circle cx="50" cy="47.500" r="3.300" fill="none" stroke="#15303f" stroke-width="1.800"/><path d="M50 40.500V44" stroke="#15303f" stroke-width="2"/>
          <path d="M48.500 52L39.500 73M51.500 52L60.500 73" stroke="#15303f" stroke-width="4.600" stroke-linecap="round"/><path d="M44 63Q50 67 56 63" fill="none" stroke="#15303f" stroke-width="2"/>
        </svg>
      </button>
      <button class="slot running" aria-label="PyCharm">
        <svg viewBox="0 0 100 100">
          <defs>
            <linearGradient id="pc-rim" x1="0" y1="0" x2="1" y2="1"><stop offset="0" stop-color="#3fe26a"/><stop offset=".25" stop-color="#9cf04c"/><stop offset=".5" stop-color="#f0ea4c"/><stop offset="1" stop-color="#e0e04a"/></linearGradient>
            <linearGradient id="pc-core" x1="0" y1="0" x2="1" y2="1"><stop offset="0" stop-color="#1c3a1a"/><stop offset=".6" stop-color="#000"/></linearGradient>
          </defs>
          <rect x="12" y="12" width="76" height="76" fill="url(#pc-rim)"/>
          <rect x="18.500" y="18.500" width="63" height="63" fill="#b5b736" opacity=".7"/>
          <rect x="22" y="22" width="56" height="56" fill="url(#pc-core)"/>
          <text class="pycharm" x="27" y="50">PC</text><rect x="29" y="67" width="21" height="4" fill="#fff"/>
        </svg>
      </button>
      <span class="dock-line"></span>
      <button class="slot" aria-label="시스템 환경설정">
        <svg viewBox="0 0 100 100">
          <defs><linearGradient id="set-bg" x1="0" y1="0" x2="0" y2="1"><stop offset="0" stop-color="#d8e2e8"/><stop offset="1" stop-color="#8d8a88"/></linearGradient></defs>
          <rect x="10" y="10" width="80" height="80" rx="18" fill="url(#set-bg)"/>
          <circle cx="50" cy="50" r="35" fill="#2a2c2e"/>
          <circle cx="50" cy="50" r="31" fill="none" stroke="#b4b6b6" stroke-width="4" stroke-dasharray="1.700 1.550"/>
          <circle cx="50" cy="50" r="27" fill="#4a4b4c" stroke="#b9bbbb" stroke-width="4"/>
          <circle cx="50" cy="50" r="18" fill="#5c5d5e" stroke="#8e9090" stroke-width="3" stroke-dasharray="1.200 1"/>
          <circle cx="50" cy="50" r="13" fill="#4e4f50" stroke="#898b8b"/>
          <path d="M50 50H76M50 50L37 27.500M50 50L37 72.500" stroke="#c4c6c6" stroke-width="4"/>
          <circle cx="50" cy="50" r="4" fill="#b4b6b6"/><circle cx="50" cy="50" r="1.300" fill="#333"/>
        </svg>
        <span class="badge">1</span>
      </button>
      <button class="slot" aria-label="미리보기">
        <svg viewBox="0 0 100 100">
          <defs>
            <linearGradient id="sky" x1="0" y1="0" x2="0" y2="1"><stop offset="0" stop-color="#7fa9e4"/><stop offset="1" stop-color="#c3cdec"/></linearGradient>
            <linearGradient id="lens" x1="0" y1="0" x2="1" y2="0"><stop offset="0" stop-color="#5c5e62"/><stop offset=".25" stop-color="#e6e8ea"/><stop offset=".75" stop-color="#dcdfe2"/><stop offset="1" stop-color="#4c4e52"/></linearGradient>
          </defs>
          <rect x="10" y="10" width="80" height="80" rx="18" fill="#f0f0f2"/>
          <rect x="16" y="16" width="68" height="68" rx="8" fill="url(#sky)"/>
          <path d="M16 53H84V76H16Z" fill="#2c4586"/>
          <path d="M16 64Q30 60 40 66L60 62V84H24Q16 84 16 76Z" fill="#dbe6ee"/>
          <path d="M16 62L24 60L30 66L20 67ZM32 64H40L46 68L36 69ZM20 81L30 76L44 78L46 84H24Z" fill="#4f473c"/>
          <path d="M52 64H84L93 90Q92 95 68 95Q45 95 44 90Z" fill="url(#lens)"/><ellipse cx="68" cy="88" rx="17" ry="5" fill="#f5f6f7"/>
          <path d="M61 78L67 73L69 80L62 84ZM67 68L74 67L72 74ZM70 79L76 76L76 83Z" fill="#6f7480"/>
          <rect x="50" y="51" width="37" height="17" rx="4" fill="#17181a"/><ellipse cx="68.500" cy="53" rx="17" ry="3.500" fill="#35373a"/>
        </svg>
      </button>
      <span class="dock-line"></span>
      <button class="slot" aria-label="다운로드">
        <svg viewBox="0 0 100 100">
          <defs><linearGradient id="folder" x1="0" y1="0" x2="0" y2="1"><stop offset="0" stop-color="#8ccbf7"/><stop offset="1" stop-color="#6ab9e8"/></linearGradient></defs>
          <path d="M4 18Q4 12 10 12H30Q34 12 37 15L40 18Q42 20 46 20H90Q96 20 96 26V40H4Z" fill="#4794d0"/>
          <rect x="4" y="25" width="92" height="65" rx="5" fill="url(#folder)"/>
          <path d="M4 81.500H96M4 85H96" stroke="#5faede"/>
          <circle cx="50" cy="54" r="17.500" fill="#539fd8"/>
          <path d="M50 45V63M43 56L50 63L57 56" fill="none" stroke="#8ccbf7" stroke-width="2.500" stroke-linecap="round" stroke-linejoin="round"/>
        </svg>
      </button>
      <button class="slot" aria-label="휴지통">
        <svg viewBox="0 0 100 100">
          <defs><linearGradient id="bin" x1="0" y1="0" x2="1" y2="0"><stop offset="0" stop-color="#d4d2d8"/><stop offset=".4" stop-color="#efeef1"/><stop offset="1" stop-color="#cdcad3"/></linearGradient></defs>
          <ellipse cx="50" cy="16" rx="35" ry="9" fill="#a79bb5"/>
          <path d="M20 15L16 10L24 7L28 3L36 6L40 2L48 7L55 3L60 8L68 6L70 11L78 10L80 18L70 24H30Z" fill="#e8e8e8"/>
          <path d="M24 8L30 12L26 17ZM38 6L42 10L34 11ZM57 8L66 14L60 20L54 14ZM72 12L76 18L70 17Z" fill="#4a4a4e"/>
          <path d="M40 13L47 12L44 17Z" fill="#39b6d6"/><path d="M48 16L52 14L51 22L47 21Z" fill="#c46a3a"/><path d="M63 10L70 15L66 18Z" fill="#3f57a5"/>
          <path d="M15 16Q16 25 50 25Q84 25 85 16L78 86Q77 95 50 95Q23 95 22 86Z" fill="url(#bin)" opacity=".96"/>
          <path d="M44 38Q60 36 70 28" fill="none" stroke="#fff" stroke-width="2" opacity=".7"/>
          <path d="M15 16Q16 25 50 25Q84 25 85 16" fill="none" stroke="#fbfbfd" stroke-width="1.200"/>
        </svg>
      </button>
    </footer>
  </div>
</body>
</html>
```
FILE: styles.css
```css
* {
  box-sizing: border-box;
}

body {
  margin: 0;
  font-family: Inter, "Noto Sans CJK KR", sans-serif;
  font-size: 24px;
  background-color: #160440;
  color: #262626;
}

button {
  margin: 0;
  padding: 0;
  border: none;
  background: none;
  font-family: inherit;
  cursor: pointer;
}

.wallpaper {
  position: fixed;
  top: 0;
  left: 0;
  width: 100%;
  height: 100%;
}

.desktop {
  position: relative;
  display: flex;
  flex-direction: column;
  height: 100vh;
  padding: 46px 72px 6px 98px;
  overflow: hidden;
}

/* finder window */

.window {
  display: flex;
  flex: 1;
  min-height: 0;
  border-radius: 20px;
  overflow: hidden;
  background-color: #fff;
  box-shadow: 0 0 2px rgba(0, 0, 0, 0.6), 0 24px 50px rgba(0, 0, 0, 0.45);
}

.sidebar {
  flex: none;
  width: 294px;
  padding: 0 20px;
  border-right: 2px solid #c8bdd2;
  background: linear-gradient(#d6c6e3, #d2c3e4 45%, #cdc4dc 70%, #cdc4dc);
  overflow: hidden;
}

.lights {
  display: flex;
  align-items: center;
  gap: 16px;
  height: 104px;
  padding-left: 20px;
}

.light {
  width: 24px;
  height: 24px;
  border: 1px solid rgba(0, 0, 0, 0.15);
  border-radius: 50%;
}

.close {
  background-color: #ed6a5e;
}

.minimize {
  background-color: #f5bf4f;
}

.maximize {
  background-color: #61c554;
}

.sidebar h2 {
  margin: 26px 0 0;
  padding-left: 12px;
  font-size: 20px;
  font-weight: 600;
  line-height: 38px;
  color: #9487a5;
}

.sidebar h2:first-child {
  margin-top: 0;
}

.sidebar h2:lang(en) {
  font-size: 22px;
}

.sidebar ul {
  margin: 0;
  padding: 0;
  list-style: none;
}

.sidebar li {
  display: flex;
}

.sidebar a {
  display: flex;
  flex: 1;
  align-items: center;
  gap: 8px;
  height: 56px;
  padding-left: 12px;
  border-radius: 10px;
  line-height: 32px;
  white-space: nowrap;
  color: #413b4a;
  text-decoration: none;
}

.sidebar a:lang(en),
.name:lang(en) {
  font-size: 26px;
}

.sidebar a.selected {
  background-color: #bbadcc;
}

.side-icon {
  flex: none;
  width: 40px;
  height: 32px;
}

.eject {
  align-self: flex-end;
  width: 20px;
  height: 20px;
  margin: 0 24px 7px 0;
}

.eject svg {
  display: block;
}

.content {
  display: flex;
  flex: 1;
  flex-direction: column;
  min-width: 0;
}

/* toolbar */

.toolbar {
  display: flex;
  flex: none;
  align-items: center;
  height: 105px;
  padding: 0 25px 2px 28px;
  border-bottom: 2px solid #d9d6dc;
  background-color: #f0eef3;
}

.toolbar h1 {
  flex: 1;
  margin: 0 0 0 20px;
  font-size: 28px;
  font-weight: 700;
  line-height: 40px;
  white-space: nowrap;
  color: #4a474d;
}

.tool {
  display: flex;
  flex: none;
  align-items: center;
  justify-content: center;
  width: 60px;
  height: 56px;
  border-radius: 12px;
}

.tool svg {
  fill: none;
  stroke: #656268;
  stroke-width: 2.5;
  stroke-linecap: round;
  stroke-linejoin: round;
}

.tool .solid {
  fill: #656268;
  stroke: none;
}

.tool .arrow {
  stroke-width: 3.5;
}

.back,
.forward {
  width: 54px;
}

.back svg,
.forward svg {
  stroke-width: 3;
}

.forward {
  margin-left: 20px;
}

.dim svg {
  stroke: #b1aeb4;
}

.dim .solid {
  fill: #b1aeb4;
}

.views {
  display: flex;
  align-items: center;
  margin-right: 86px;
}

.views .tool {
  width: 70px;
}

.views .active {
  width: 78px;
  margin-right: 6px;
  background-color: #e2e0e5;
}

.views .active svg {
  stroke: #444147;
}

.views .active .solid {
  fill: #444147;
  stroke: none;
}

.divider {
  width: 2px;
  height: 40px;
  margin-left: 4px;
  background-color: #e2e0e5;
}

.group,
.more {
  gap: 16px;
  width: 84px;
}

.share {
  margin: 0 19px 0 22px;
}

.more {
  margin: 0 84px 0 28px;
}

/* file list */

.list {
  flex: 1;
  min-height: 0;
  padding: 0 20px;
  overflow: hidden;
  background: linear-gradient(#fcfcfc 53px, #dcdcdc 53px, #dcdcdc 55px, #fff 55px);
}

table {
  width: 100%;
  table-layout: fixed;
  border-collapse: separate;
  border-spacing: 0;
}

.col-date {
  width: 362px;
}

.col-size {
  width: 194px;
}

.col-kind {
  width: 243px;
}

th {
  height: 55px;
  padding: 0 0 5px;
  font-size: 20px;
  font-weight: 400;
  text-align: left;
  color: #7c7c7c;
}

th span {
  display: block;
  height: 38px;
  padding-left: 14px;
  border-left: 1px solid #dedede;
  line-height: 38px;
}

th.sorted {
  font-weight: 700;
  color: #262626;
}

th.sorted span {
  display: flex;
  align-items: center;
  justify-content: space-between;
  padding: 0 18px 0 74px;
  border-left: none;
}

th svg {
  fill: none;
  stroke: #7c7c7c;
  stroke-width: 2;
}

td {
  height: 40px;
  padding: 0 0 0 15px;
  line-height: 32px;
  white-space: nowrap;
  color: #808080;
}

td:first-child {
  padding-left: 0;
  border-radius: 10px 0 0 10px;
  color: #262626;
}

td:nth-child(2) {
  font-size: 25px;
}

td:nth-child(3) {
  padding: 0 13px 0 0;
  font-size: 26px;
  text-align: right;
}

td:last-child {
  border-radius: 0 10px 10px 0;
}

tbody tr:nth-child(odd) td {
  background-color: #f4f5f5;
}

/* top row is scrolled partly under the header */
tbody tr:first-child td {
  height: 36px;
  padding-bottom: 4px;
  border-top-left-radius: 0;
  border-top-right-radius: 0;
}

.name {
  display: flex;
  align-items: center;
  height: 32px;
}

.toggle {
  display: flex;
  flex: none;
  align-items: center;
  justify-content: center;
  width: 34px;
  height: 32px;
}

.toggle svg {
  fill: none;
  stroke: #7f7f7f;
  stroke-width: 3;
  stroke-linecap: round;
}

.app {
  flex: none;
  width: 28px;
  height: 28px;
  margin-right: 12px;
  overflow: visible;
  filter: drop-shadow(0 1px 1px rgba(0, 0, 0, 0.3));
}

.talk {
  font: 800 7px Inter, sans-serif;
  fill: #f9e049;
}

.cal-month {
  font: 700 6px Inter, sans-serif;
  fill: #fff;
}

.cal-day {
  font: 400 15px Inter, sans-serif;
  fill: #3c3c3c;
}

/* dock */

.dock {
  display: flex;
  flex: none;
  align-items: flex-end;
  justify-content: space-between;
  height: 132px;
  margin: 206px 20px 0 230px;
  padding: 0 8px 18px 7px;
  border: 2px solid rgba(255, 255, 255, 0.2);
  border-radius: 36px;
  background: linear-gradient(90deg, #635688, #68569a 40%, #6e559f 60%, #9a53cb 71%, #9d55d0 80%, #8a56bb) border-box;
}

.slot {
  position: relative;
  flex: none;
  width: 102px;
  height: 102px;
}

.slot > svg {
  display: block;
  filter: drop-shadow(0 2px 2px rgba(0, 0, 0, 0.3));
}

.slot-xl {
  width: 212px;
  height: 212px;
}

.slot-l {
  width: 196px;
  height: 196px;
}

.slot-m {
  width: 160px;
  height: 160px;
}

.slot-s {
  width: 110px;
  height: 110px;
}

.running::after {
  content: "";
  position: absolute;
  bottom: -16px;
  left: 50%;
  width: 8px;
  height: 8px;
  margin-left: -4px;
  border-radius: 50%;
  background-color: #0b0121;
}

.tooltip {
  position: absolute;
  bottom: 244px;
  left: 40px;
  width: 134px;
  border-radius: 8px;
  background-color: #968dae;
  font-size: 27px;
  line-height: 52px;
  text-align: center;
  color: #0a0a0f;
}

.tooltip::after {
  content: "";
  position: absolute;
  top: 100%;
  left: 50%;
  margin-left: -14px;
  border: 14px solid transparent;
  border-top: 16px solid #968dae;
  border-bottom: none;
}

.badge {
  position: absolute;
  top: -2px;
  right: -4px;
  width: 40px;
  height: 40px;
  border-radius: 50%;
  background-color: #e9524a;
  font-size: 24px;
  line-height: 40px;
  text-align: center;
  color: #fff;
}

.dock-line {
  width: 2px;
  height: 96px;
  margin: 0 20px;
  background-color: #5a1f9a;
}

.prompt {
  font: 700 20px "Liberation Mono", monospace;
  fill: #62e04a;
}

.pycharm {
  font: 700 30px "Open Sans", sans-serif;
  fill: #fff;
}
```
